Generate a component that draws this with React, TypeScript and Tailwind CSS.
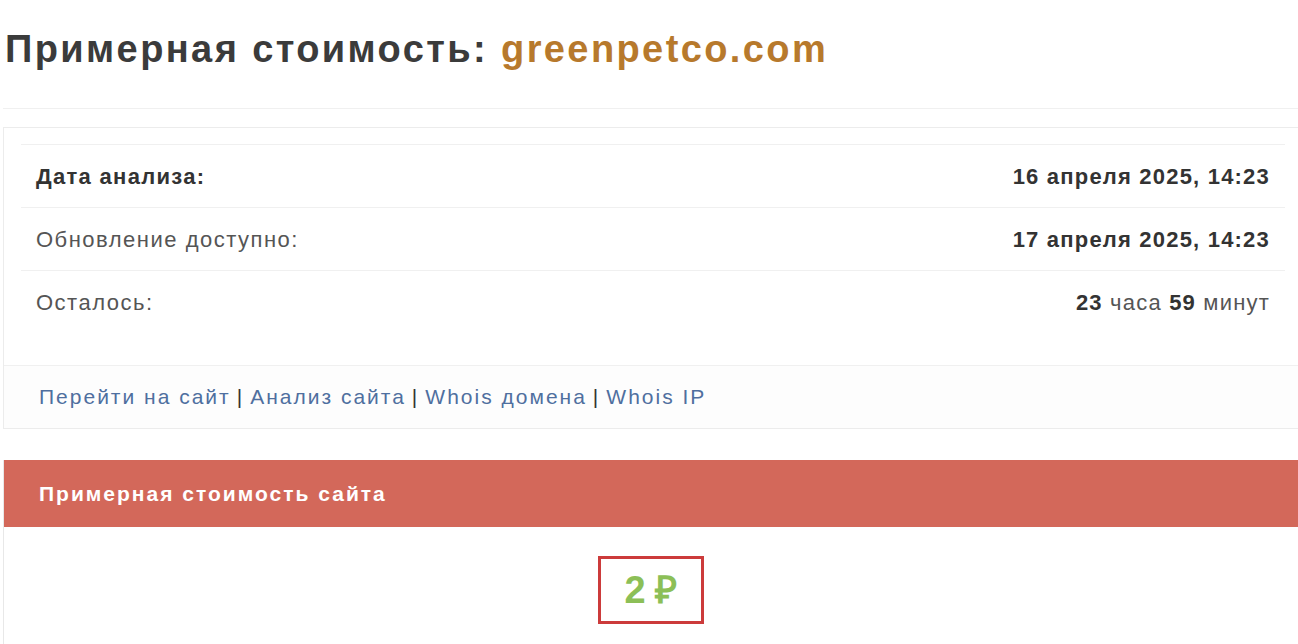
import React from 'react';

const font = { fontFamily: '"Liberation Sans", Arial, sans-serif' };

function InfoRow({ label, value, boldLabel, last }: { label: string; value: React.ReactNode; boldLabel?: boolean; last?: boolean }) {
    return (
        <div className={`flex items-center justify-between h-[63px] px-[15px] ${last ? '' : 'border-b border-[#f0f0f0]'}`}>
            <span className={boldLabel ? 'font-bold text-[#333] tracking-[1.3px]' : 'text-[#555] tracking-[1.5px]'}>{label}</span>
            <span className="text-[#555] tracking-[1.2px]">{value}</span>
        </div>
    );
}

export default function App() {
    return (
        <div className="w-[1298px] h-[644px] overflow-hidden bg-white" style={font}>
            <div className="w-[1300px] ml-[3px]">
                <h1 className="mt-[30px] ml-[2px] text-[38px] leading-none font-bold tracking-[2.4px] text-[#3b3b3b]">
                    Примерная стоимость: <span className="text-[#b7792c]">greenpetco.com</span>
                </h1>
                <hr className="mt-[40px] border-0 border-t border-[#f0f0f0]" />

                {/* dates panel */}
                <div className="mt-[18px] border border-[#ececec] text-[22px]">
                    <div className="px-[17px] pt-[16px] pb-[31px]">
                        <div className="border-t border-[#f0f0f0]">
                            <InfoRow label="Дата анализа:" boldLabel value={<b className="text-[#333]">16 апреля 2025, 14:23</b>} />
                            <InfoRow label="Обновление доступно:" value={<b className="text-[#333]">17 апреля 2025, 14:23</b>} />
                            <InfoRow
                                label="Осталось:"
                                last
                                value={<><b className="text-[#333]">23</b> часа <b className="text-[#333]">59</b> минут</>}
                            />
                        </div>
                    </div>
                    <div className="h-[63px] flex items-center px-[35px] border-t border-[#f0f0f0] bg-[#fdfdfd] text-[21px] tracking-[2px] text-[#333]">
                        <a className="text-[#4f6f9f]">Перейти на сайт</a>
                        <span className="mx-[6px]">|</span>
                        <a className="text-[#4f6f9f]">Анализ сайта</a>
                        <span className="mx-[6px]">|</span>
                        <a className="text-[#4f6f9f]">Whois домена</a>
                        <span className="mx-[6px]">|</span>
                        <a className="text-[#4f6f9f]">Whois IP</a>
                    </div>
                </div>

                {/* price panel */}
                <div className="mt-[31px] border border-[#e8e8e8] border-t-0">
                    <div className="h-[67px] flex items-center px-[35px] bg-[#d3685a] text-white font-bold text-[21px] tracking-[2px]">
                        Примерная стоимость сайта
                    </div>
                    <div className="pt-[29px] pb-[30px] flex justify-center pr-[5px]">
                        <div className="w-[106px] h-[68px] border-[3px] border-[#cc3b3b] flex items-center justify-center text-[38px] font-bold text-[#8cbf57]">
                            <span>2</span>
                            <span className="ml-[9px]">₽</span>
                        </div>
                    </div>
                </div>
            </div>
        </div>
    );
}
